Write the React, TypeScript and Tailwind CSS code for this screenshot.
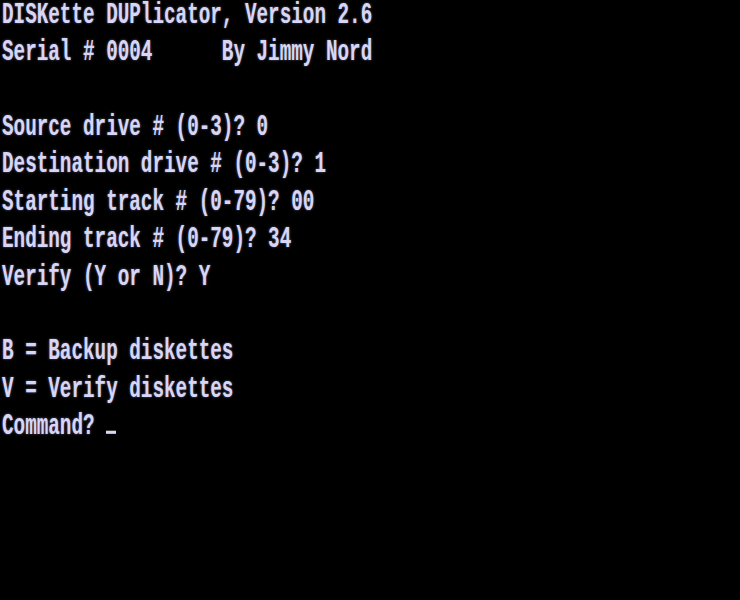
import React from 'react'

const lines: string[] = [
  'DISKette DUPlicator, Version 2.6',
  'Serial # 0004      By Jimmy Nord',
  '',
  'Source drive # (0-3)? 0',
  'Destination drive # (0-3)? 1',
  'Starting track # (0-79)? 00',
  'Ending track # (0-79)? 34',
  'Verify (Y or N)? Y',
  '',
  'B = Backup diskettes',
  'V = Verify diskettes',
]

// one row of the 64-column text screen
const Line = ({ children }: { children?: React.ReactNode }) => (
  <div className="h-[37.4px] pt-[6.9px] whitespace-pre">
    <span className="block h-[16px] leading-[16px] origin-center scale-y-[1.57]">{children}</span>
  </div>
)

const App = () => {
  return (
    <div className="w-[740px] h-[600px] bg-black overflow-hidden">
      <div
        className="pl-[2px] text-[19.3px] font-bold text-[#d8d6f6] [text-shadow:0_0_2px_rgba(200,200,255,0.5)]"
        style={{ fontFamily: '"Liberation Mono", "DejaVu Sans Mono", monospace' }}
      >
        {lines.map((l, i) => (
          <Line key={i}>{l}</Line>
        ))}
        <Line>
          Command?{' '}
          <span className="inline-block w-[10px] h-[2px] bg-[#d8d6f6] align-baseline" />
        </Line>
      </div>
    </div>
  )
}

export default App
